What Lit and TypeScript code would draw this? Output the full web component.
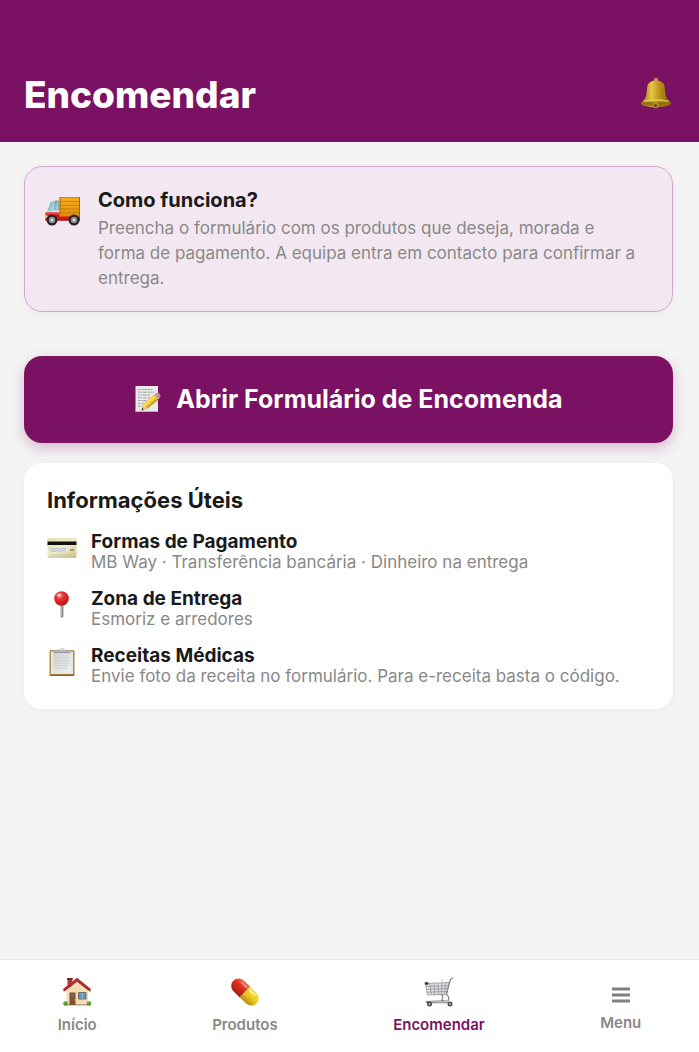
import {LitElement, html, css, svg} from 'lit';
import {customElement, property, state} from 'lit/decorators.js';
import {classMap} from 'lit/directives/class-map.js';

const bell = html`
    <svg width="34" height="34" viewBox="0 0 34 34" aria-hidden="true">
        <defs>
            <linearGradient id="brass">
                <stop offset="0" stop-color="#96700c"/>
                <stop offset=".35" stop-color="#e3c746"/>
                <stop offset=".6" stop-color="#bd961c"/>
                <stop offset="1" stop-color="#7d5c08"/>
            </linearGradient>
        </defs>
        <circle cx="17" cy="2" r="2.200" fill="#b98d5c"/>
        <path d="M17 2.500c-5 0-8.200 2-8.800 7-.5 5-.6 8-2.200 11L2.200 24.500c-1 1.800 1 3 4 3.400 6.500 1.200 15 1.200 21.600 0 3-.4 5-1.600 4-3.400L28 20.500c-1.600-3-1.700-6-2.200-11-.6-5-3.800-7-8.800-7z" fill="url(#brass)"/>
        <path d="M2 25.200c5-1.800 25-1.800 30 0-1.500 3.800-28.500 3.800-30 0z" fill="#947012"/>
        <path d="M4.500 23.400c7-1.500 18-1.500 25 0" fill="none" stroke="#e0c84e" stroke-width="1.400"/>
        <circle cx="16.500" cy="27" r="3.300" fill="#b38c20"/>
        <circle cx="16.500" cy="27.600" r="1.500" fill="#62490a"/>
    </svg>`

const truck = html`
    <svg width="38" height="34" viewBox="0 0 38 34" aria-hidden="true">
        <defs>
            <linearGradient id="cargo" x2="0" y2="1">
                <stop offset="0" stop-color="#fbb01c"/>
                <stop offset="1" stop-color="#e38d08"/>
            </linearGradient>
            <linearGradient id="glass" x2="1" y2="1">
                <stop offset="0" stop-color="#5aa5b8"/>
                <stop offset="1" stop-color="#b4e3ea"/>
            </linearGradient>
        </defs>
        <path d="M1 18L4.500 8Q6 5.800 9 5.800h6V24H1z" fill="#e9e6e0"/>
        <path d="M2.200 17.500L5.500 8.800q.8-1.800 3.500-1.900l-1 10.600z" fill="url(#glass)"/>
        <path d="M10 6.900h3.600v8.800H9z" fill="url(#glass)" stroke="#6d8a90" stroke-width=".6"/>
        <path d="M.5 18.500h14V22H35v4.500H.5z" fill="#d3161b"/>
        <path d="M.5 18.500h14v2H.5z" fill="#f04339"/>
        <path d="M14.500 3H35v19.500H14.500z" fill="url(#cargo)"/>
        <path d="M15 3.600h19.500M15 7.500h19.500M15 11.200h19.500M15 15h19.500M15 18.700h19.500" stroke="#b87a14" stroke-width=".8"/>
        <path d="M34.500 3v19.500M15 3v19.500" stroke="#9d6b13"/>
        <path d="M.5 21.500h2v2h-2z" fill="#fff3b0"/>
        <path d="M.5 26h34.500" stroke="#891015"/>
        ${[7, 29].map(x => svg`
            <circle cx=${x} cy="26" r="5.500" fill="#26272a"/>
            <circle cx=${x} cy="26" r="3.200" fill="#8c8e90"/>
            <circle cx=${x} cy="26" r="1.400" fill="#dcdcdc"/>`)}
    </svg>`

const memo = html`
    <svg width="28" height="30" viewBox="0 0 28 30" aria-hidden="true">
        <path d="M1.500 1h22.500v26H1.500z" fill="#eaebe9"/>
        <path d="M1.500 26.500H24" stroke="#b5b1b8"/>
        <path d="M4 4.500h15M4 7.200h16M4 10h13M4 12.800h12M4 15.600h9M4 18.400h6M4 21.200h4" stroke="#9a9ea2" stroke-dasharray="2.500 .8 1.200 .6 3.500 1"/>
        <path d="M7.500 25.500l1.600-6.500L20.500 9.500l4 4.600L13 23.800z" fill="#efb81e"/>
        <path d="M9.600 19.600l11.400-9.500 1.500 1.700L11 21.400z" fill="#ffdf5c"/>
        <path d="M12.600 23.700L24.300 13.900" stroke="#a8740f"/>
        <path d="M7.500 25.500l1.600-6.500 3.900 4.800z" fill="#e9c99a"/>
        <path d="M7.500 25.500l.7-2.700 1.700 1.900z" fill="#333"/>
        <path d="M20 10l1.900-1.700 4 4.600-1.900 1.700z" fill="#aab0b5"/>
        <path d="M21.700 8.500q2.300-1.800 4 .2 1.700 2 0 4z" fill="#e07c85"/>
    </svg>`

const card = html`
    <svg width="30" height="30" viewBox="0 0 30 30" aria-hidden="true">
        <defs>
            <linearGradient id="plastic" x2="1" y2="1">
                <stop offset="0" stop-color="#e6dfaf"/>
                <stop offset=".5" stop-color="#f0ebc8"/>
                <stop offset="1" stop-color="#cfc488"/>
            </linearGradient>
        </defs>
        <rect x=".5" y="5" width="29" height="19.500" rx="1.200" fill="url(#plastic)"/>
        <path d="M.5 8.500h29V12H.5z" fill="#11110f"/>
        <path d="M2.500 14.500h18v4.700h-18z" fill="#e8eceb"/>
        <path d="M3 15.800q2-1 3 0t3 0 3 0 3 0 4 0M3 18q2-1 3 0t3 0 3 0 3 0 4 0" fill="none" stroke="#98a4b2" stroke-width=".8"/>
        <path d="M23 17h4" stroke="#53534e"/>
        <path d="M3 22h21" stroke="#c5bd8a" stroke-width=".8"/>
        <path d="M1 24.200h28" stroke="#aaa06b" stroke-width=".6"/>
    </svg>`

const pin = html`
    <svg width="30" height="30" viewBox="0 0 30 30" aria-hidden="true">
        <defs>
            <radialGradient id="ball" cx=".38" cy=".3" r=".7">
                <stop offset="0" stop-color="#ff9a90"/>
                <stop offset=".35" stop-color="#ee3433"/>
                <stop offset="1" stop-color="#b90f19"/>
            </radialGradient>
        </defs>
        <path d="M13.600 13h2.800v13.500L15 28l-1.400-1.500z" fill="#8f8885"/>
        <path d="M14.600 14v12.500" stroke="#c4bdba" stroke-width=".8"/>
        <circle cx="14.500" cy="8.500" r="7.300" fill="url(#ball)"/>
        <ellipse cx="12" cy="5.200" rx="2" ry="1.400" fill="#ffd0cb"/>
    </svg>`

const clipboard = html`
    <svg width="30" height="30" viewBox="0 0 30 30" aria-hidden="true">
        <defs>
            <linearGradient id="sheet" x2="1" y2="1">
                <stop offset="0" stop-color="#cfd0d2"/>
                <stop offset="1" stop-color="#f1f1f1"/>
            </linearGradient>
        </defs>
        <rect x="2.500" y="3" width="25" height="26" rx="1.500" fill="#b58a48"/>
        <path d="M2.800 28.300h24.400" stroke="#7c5823"/>
        <path d="M4 4.500h22v22.500H4z" fill="#e4e6e8"/>
        <path d="M6 6h18v19.500H6z" fill="url(#sheet)"/>
        <path d="M8 11h14M8 13.500h14M8 16h14M8 18.500h14M8 21h12" stroke="#c9cacc" stroke-width=".8"/>
        <path d="M6.500 3.500h5.500q1-2.600 3-2.600t3 2.600h5.500v2H6.500z" fill="#b4bac0"/>
        <path d="M6.500 5.400h17" stroke="#7d858c" stroke-width=".8"/>
        <circle cx="15" cy="2.600" r="1" fill="#eef1f3"/>
    </svg>`

const house = html`
    <svg width="30" height="30" viewBox="0 0 30 30" aria-hidden="true">
        <path d="M5.500 1.500h4.800v9H5.500z" fill="#a5392f"/>
        <path d="M5 1h5.800v1.800H5z" fill="#762721"/>
        <path d="M4.500 13L16 3.500 26 13v15H4.500z" fill="#f5dcb4"/>
        <path d="M4.500 27h21.500v1.500H4.500z" fill="#b9a183"/>
        <path d="M1.500 13.200L15 2.500 28.500 13.200" fill="none" stroke="#b52e30" stroke-width="2.600"/>
        <path d="M1.500 14.600L15 4.300l13.500 10.300" fill="none" stroke="#752022" stroke-width=".8"/>
        <path d="M7.500 15.500h6V28h-6z" fill="#80502f"/>
        <path d="M9 17h3v3.500H9z" fill="#4f7086"/>
        <circle cx="12.500" cy="23" r=".6" fill="#e5c15a"/>
        <path d="M16.500 15.500h7.500v6.500h-7.500z" fill="#5b9ac1" stroke="#6d6a67"/>
        <path d="M20.200 16v6" stroke="#a5cbde" stroke-width=".8"/>
        <circle cx="3.500" cy="26.500" r="2.200" fill="#518d2b"/>
        <circle cx="27" cy="26.500" r="2.200" fill="#518d2b"/>
        <circle cx="3" cy="25.700" r="1" fill="#82b84b"/>
        <circle cx="26.500" cy="25.700" r="1" fill="#82b84b"/>
    </svg>`

const pill = html`
    <svg width="30" height="30" viewBox="0 0 30 30" aria-hidden="true">
        <defs>
            <linearGradient id="redHalf" x2="0" y2="1">
                <stop offset="0" stop-color="#f4705a"/>
                <stop offset=".4" stop-color="#e1311f"/>
                <stop offset="1" stop-color="#a81b12"/>
            </linearGradient>
            <linearGradient id="yellowHalf" x2="0" y2="1">
                <stop offset="0" stop-color="#f6e55d"/>
                <stop offset=".5" stop-color="#ecc922"/>
                <stop offset="1" stop-color="#b88f0c"/>
            </linearGradient>
        </defs>
        <g transform="rotate(44 15 15)">
            <path d="M15 7.500H6.200a7.500 7.500 0 0 0 0 15H15z" fill="url(#redHalf)"/>
            <path d="M15 7.500h8.800a7.500 7.500 0 0 1 0 15H15z" fill="url(#yellowHalf)"/>
            <path d="M6 10.500h7" stroke="#f99a84" stroke-width="1.400" stroke-linecap="round"/>
            <path d="M17 10.500h7" stroke="#fff6ad" stroke-width="1.400" stroke-linecap="round"/>
        </g>
    </svg>`

const cart = html`
    <svg width="30" height="30" viewBox="0 0 30 30" aria-hidden="true">
        <path d="M1.500 6.500l23.500-1-2.500 11.800-19 .7z" fill="#e3e4e5"/>
        <path d="M1.500 6.500l23.500-1-2.500 11.800-19 .7zM2 9.500l22.500-.8M2.500 12.300l21.300-.7M3 15.200l20.200-.7M6 6.500l1.300 11M10 6.300l.8 11.200M14 6.100l.3 11.200M18 5.900l-.4 11.300M22 5.700l-1.700 11.500" fill="none" stroke="#8f9194" stroke-width=".8"/>
        <path d="M29 1l-2.600 1.500-4 15" fill="none" stroke="#7c7e81" stroke-width="1.100"/>
        <path d="M.8 5.200h3.400v2.500H.8z" fill="#303134"/>
        <path d="M18 2l.5 4" stroke="#aaa" stroke-width=".8"/>
        <path d="M17 17.500q3 1.500 1.500 3.500t1 3h5M22.500 17.500q3 2 2 6M20.500 23.800l-18 .7q-.8 0 0 1.200h24" fill="none" stroke="#7c7e81" stroke-width="1.100"/>
        ${[5.5, 26].map(x => svg`
            <circle cx=${x} cy="27" r="2.500" fill="#4b4d50"/>
            <circle cx=${x} cy="27" r=".9" fill="#c8c8c8"/>`)}
    </svg>`

const bars = html`
    <svg width="18" height="26" viewBox="0 0 18 26" aria-hidden="true">
        <path d="M0 10h18M0 16h18M0 22h18" stroke="#808080" stroke-width="2.800"/>
    </svg>`

const infoItems = [
    {icon: card, title: 'Formas de Pagamento', text: 'MB Way · Transferência bancária · Dinheiro na entrega'},
    {icon: pin, title: 'Zona de Entrega', text: 'Esmoriz e arredores'},
    {icon: clipboard, title: 'Receitas Médicas', text: 'Envie foto da receita no formulário. Para e-receita basta o código.'}
]

const tabs = [
    {id: 'inicio', label: 'Início', icon: house},
    {id: 'produtos', label: 'Produtos', icon: pill},
    {id: 'encomendar', label: 'Encomendar', icon: cart},
    {id: 'menu', label: 'Menu', icon: bars}
]

@customElement('info-item')
export class InfoItem extends LitElement {
    @property({attribute: false}) item: any

    static styles = css`
        :host {
            display: flex;
            align-items: flex-start;
            gap: 14px;
        }
        .icon {
            display: flex;
            padding-top: 2px;
        }
        .title, .text {
            margin: 0;
            line-height: 21px;
        }
        .title {
            font-size: 19px;
            font-weight: 700;
            color: #1a1a1a;
        }
        .text {
            font-size: 17px;
            color: #888;
        }
    `

    render() {
        return html`
            <span class="icon">${this.item.icon}</span>
            <div>
                <h3 class="title">${this.item.title}</h3>
                <p class="text">${this.item.text}</p>
            </div>
        `
    }
}

@customElement('app-root')
export class AppRoot extends LitElement {
    @state() active = 'encomendar'

    static styles = css`
        :host {
            display: flex;
            flex-direction: column;
            min-height: 100vh;
            background: #f4f4f4;
            font-family: Inter, "Liberation Sans", sans-serif;
            color: #1a1a1a;
        }
        button {
            border: 0;
            font-family: inherit;
            cursor: pointer;
        }
        .header {
            display: flex;
            align-items: center;
            justify-content: space-between;
            padding: 72px 26px 24px 24px;
            background: #7b1163;
        }
        .heading {
            margin: 0;
            font-size: 37px;
            line-height: 46px;
            font-weight: 800;
            color: #fff;
        }
        .bell {
            display: flex;
            padding: 0;
            background: none;
        }
        .content {
            flex: 1;
            display: flex;
            flex-direction: column;
            padding: 24px 26px 24px 24px;
        }
        .how {
            display: flex;
            align-items: flex-start;
            gap: 15px;
            margin-bottom: 44px;
            padding: 21px 28px 20px 20px;
            border: 1px solid #d3a6d0;
            border-radius: 18px;
            background: #f3e8f1;
            box-shadow: 0 2px 8px rgba(0, 0, 0, .05);
        }
        .how-icon {
            display: flex;
            padding-top: 6px;
        }
        .how-title {
            margin: 0 0 3px;
            font-size: 20px;
            line-height: 25px;
            font-weight: 700;
        }
        .how-text {
            margin: 0;
            font-size: 17px;
            line-height: 25px;
            color: #888;
        }
        .open-form {
            display: flex;
            align-items: center;
            justify-content: center;
            gap: 14px;
            margin-bottom: 20px;
            padding: 28px 24px;
            border-radius: 18px;
            background: #7b1163;
            color: #fff;
            font-size: 25px;
            line-height: 31px;
            font-weight: 700;
            box-shadow: 0 5px 14px rgba(123, 17, 99, .25);
        }
        .useful {
            display: flex;
            flex-direction: column;
            gap: 15px;
            padding: 24px 23px 22px;
            border-radius: 18px;
            background: #fff;
            box-shadow: 0 1px 6px rgba(0, 0, 0, .04);
        }
        .useful-title {
            margin: 0 0 3px;
            font-size: 22px;
            line-height: 26px;
            font-weight: 700;
        }
        .tabs {
            display: flex;
            align-items: center;
            justify-content: space-around;
            padding: 17px 0;
            border-top: 1px solid #e8e8e8;
            background: #fff;
        }
        .tab {
            display: flex;
            flex-direction: column;
            align-items: center;
            gap: 8px;
            padding: 0;
            background: none;
            color: #888;
            font-size: 15px;
            line-height: 20px;
            font-weight: 600;
        }
        .tab.active {
            color: #7b1163;
        }
    `

    select(id: string) {
        this.active = id
    }

    render() {
        return html`
            <header class="header">
                <h1 class="heading">Encomendar</h1>
                <button class="bell" aria-label="Notificações">${bell}</button>
            </header>
            <main class="content">
                <section class="how">
                    <span class="how-icon">${truck}</span>
                    <div>
                        <h2 class="how-title">Como funciona?</h2>
                        <p class="how-text">Preencha o formulário com os produtos que deseja, morada e forma de pagamento. A equipa entra em contacto para confirmar a entrega.</p>
                    </div>
                </section>
                <button class="open-form">${memo}<span>Abrir Formulário de Encomenda</span></button>
                <section class="useful">
                    <h2 class="useful-title">Informações Úteis</h2>
                    ${infoItems.map(item => html`<info-item .item=${item}></info-item>`)}
                </section>
            </main>
            <nav class="tabs">
                ${tabs.map(tab => html`
                    <button
                        class=${classMap({tab: true, active: tab.id === this.active})}
                        @click=${() => this.select(tab.id)}
                    >
                        ${tab.icon}
                        <span>${tab.label}</span>
                    </button>`
                )}
            </nav>
        `
    }
}
